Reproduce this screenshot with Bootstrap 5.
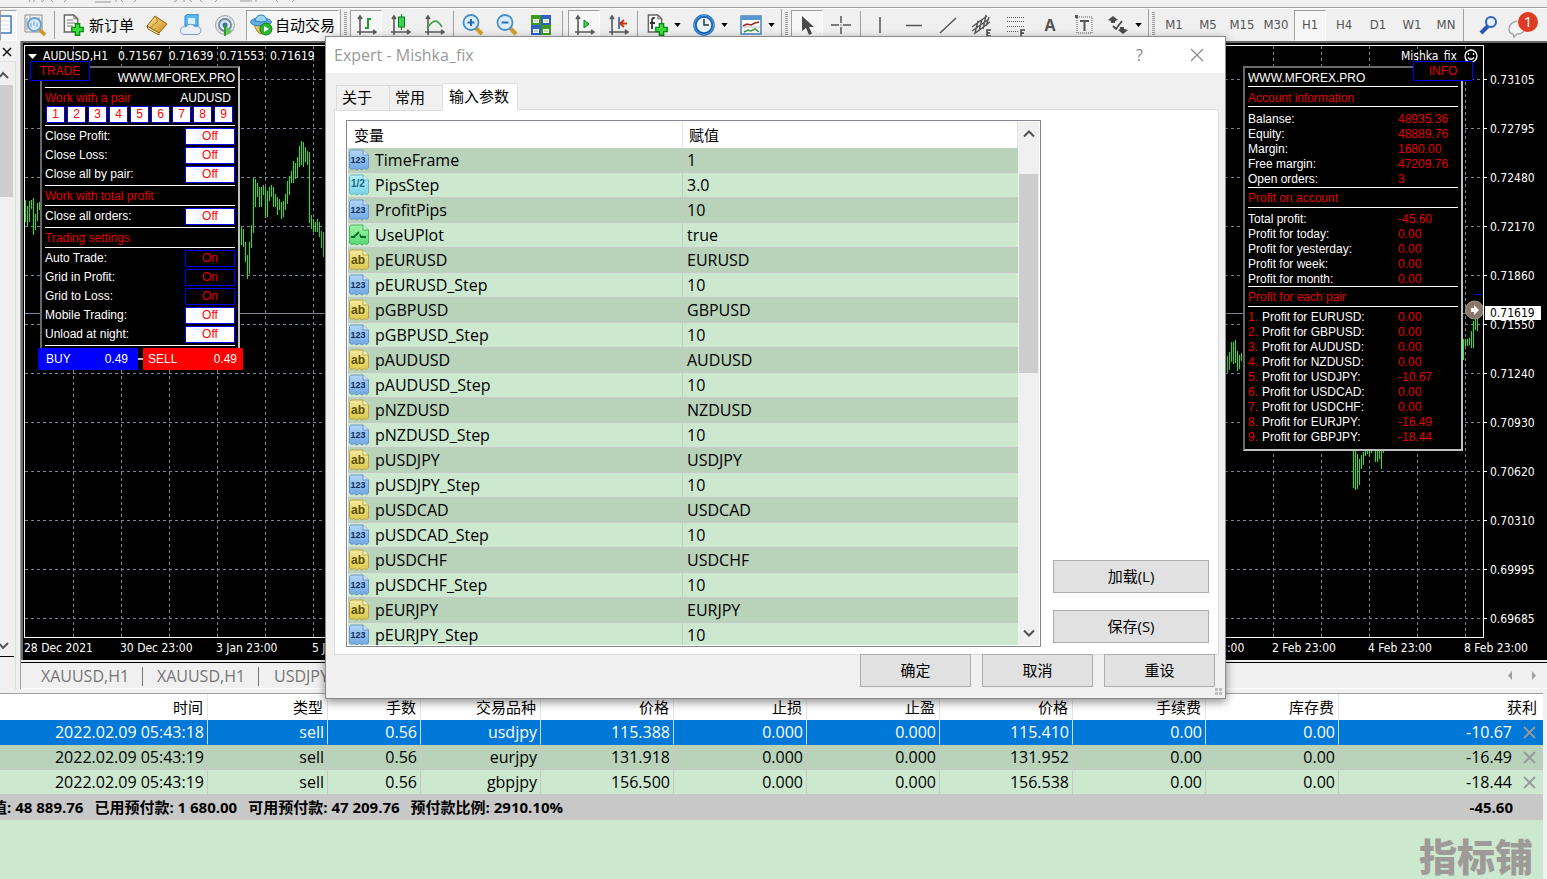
<!DOCTYPE html>
<html lang="zh-CN">
<head>
<meta charset="utf-8">
<meta name="viewport" content="width=device-width, initial-scale=1">
<title>AUDUSD,H1</title>
<link href="https://cdn.jsdelivr.net/npm/bootstrap@5.3.0/dist/css/bootstrap.min.css" rel="stylesheet">
<style>
:root{--face:#f0f0f0;--line:#a0a0a0;--mint:#cce8cf;--sage:#b8d3b9;--rule:#c8c8c8;--ui:"Open Sans","Noto Sans","Noto Sans CJK SC",sans-serif;--tahoma:"DejaVu Sans Condensed","Noto Sans",sans-serif;--arial:"Liberation Sans",Arial,sans-serif}
body{font:15px/20px var(--ui);color:#000;background:var(--face);overflow:hidden}
svg{display:block;flex:none}
button{font:inherit}
/* menu remnant and toolbar */
.menu-edge{height:8px;border-bottom:1px solid var(--line)}
.toolbar{height:33px;border-top:1px solid #fff}
.tool{width:32px;height:31px;margin:0 1px;padding:0;border:1px solid transparent;border-radius:0;background:none;color:#555;display:flex;align-items:center;justify-content:center;flex:none}
.tool.pressed{border-color:#a0a0a0 #fff #fff #a0a0a0;background:#f7f7f7}
.tool.split{width:45px;justify-content:space-between;padding:0 4px}
.tool.text{width:auto;color:#000;white-space:nowrap;gap:4px;padding:0 4px}
.tool.text.pressed{gap:2px;padding:0 3px}
.tool.frame-key{font:13px/16px var(--tahoma);color:#555}
.split-line{width:1px;height:28px;background:var(--line);margin:0 2px;flex:none}
.dock{width:9px;border-left:1px solid var(--line);flex:none;display:flex;align-items:center;padding-left:3px}
.dock i{width:3px;height:26px;background:repeating-linear-gradient(#999 0 1px,transparent 1px 2px)}
/* left dock */
.side{width:21px;border-right:1px solid var(--line);flex:none}
.side-in{width:16px;border-right:1px solid var(--mint)}
.side-thumb{width:13px;height:112px;background:#cdcdcd}
/* chart */
.chart{background:#000;color:#fff;font:12px/14px var(--tahoma);border-top:2px solid #696969;border-left:2px solid #696969;padding:2px 0 0 1px}
.plot{border:1px solid #fff;min-width:0}
.plot>svg{width:100%;height:591px}
.prices{width:63px;padding-top:10px;margin-bottom:-5px;flex:none}
.prices>div{height:49px;padding-left:6px;display:flex;align-items:center;position:relative}
.prices>div::before{content:"";position:absolute;left:0;width:3px;height:1px;background:#fff}
.price-now{position:absolute;right:6px;top:261px;width:56px;height:14px;padding-left:5px;background:#fff;color:#000;font-size:12px;line-height:14px}
.dates{height:22px;padding-top:3px;overflow:hidden}
.dates span{width:96px;flex:none;white-space:nowrap}
.dates-end{width:371px;overflow:hidden}
.symbol-line{position:absolute;left:3px;top:3px;gap:6px}
.expert-line{position:absolute;right:5px;top:3px;gap:7px}
/* expert panels */
.ea{position:absolute;top:20px;border:2px solid;border-color:#696969 #c0c0c0 #c0c0c0 #696969;background:#000;font:12px/15px var(--arial);padding:0 3px}
.ea-trade{left:15px;width:200px;height:294px}
.ea-info{right:20px;width:220px;height:385px}
.ea-tab{position:absolute;top:15px;width:60px;height:20px;background:#000;border:1px solid #00f;color:#e00000;font:12px/18px var(--arial);padding:0;text-align:center;border-radius:1px}
.ea .site{height:19px;line-height:21px}
.ea .ttl{height:19px;padding-top:2px;color:#e00000;display:flex;align-items:center}
.ea .ln{height:1px;background:#fff}
.ea .set-rows{padding:1px 0}
.ea .set{height:19px;display:flex;align-items:center;justify-content:space-between}
.pairs{height:19px;gap:2px;padding-left:1px}
.sw{width:50px;height:17px;border:1px solid #00f;border-radius:1px;background:#fff;color:#f00;padding:0;line-height:15px;text-align:center}
.sw.on{background:#000;color:#e00000}
.sw.num{width:19px}
.trade-go{position:absolute;top:302px;width:100px;height:22px;border:0;border-radius:1px;color:#fff;font:12px/22px var(--arial);padding:0 6px 0 8px;display:flex;justify-content:space-between}
.ea dl{margin:0;display:grid;grid-template-columns:150px 1fr;line-height:15px}
.ea dt{font-weight:400}.ea dd{margin:0;color:#e00000}
.ea dt b{display:inline-block;width:14px;color:#e00000;font-weight:400}
/* chart tabs */
.chart-tabs{height:27px;border-top:1px solid #000;border-bottom:1px solid #fff;margin-top:2px;padding-left:6px}
.chart-tabs a{width:116px;color:#767676;text-decoration:none;font-size:16px;line-height:22px;text-align:center;position:relative}
.chart-tabs a:last-of-type{padding-right:6px}
.chart-tabs a::after{content:"";position:absolute;right:0;top:2px;height:19px;border-right:1px solid #767676}
/* terminal */
.terminal{background:var(--mint);border-top:1px solid var(--line);margin-right:4px;min-height:0}
.deals{table-layout:fixed;border-collapse:separate;border-spacing:0}
.deals th{background:#fff;font-weight:400;height:26px;text-align:right;padding:0 4px;border-right:1px solid #e5e5e5;vertical-align:middle}
.deals td{height:25px;font-size:16px;line-height:23px;text-align:right;padding:0 3px;border-right:1px solid var(--rule);border-bottom:1px solid var(--rule);white-space:nowrap}
.deals th:last-child,.deals td:last-child{border-right:0}
.deals th:last-child{padding-right:6px}
.deals tr.sel td{background:#0078d7;color:#fff;border-bottom-color:#0078d7}
.deals tr.sel td:not(:last-child){border-right-color:#c8dcf0}
.deals tr.alt td{background:var(--sage)}
.deals td .btn{padding:0;border:0;margin-left:11px;width:13px;vertical-align:-1px;line-height:1}
.deals tfoot td{background:var(--rule);font-weight:700;font-size:15px;border-right:0}
.deals tfoot .bal{padding-left:0;overflow:hidden}
.bal-list{gap:11px;margin-left:-8px}
.stamp{position:absolute;right:14px;bottom:2px;font:900 38px/44px "Noto Sans CJK SC",sans-serif;color:#9e9a98}
/* dialog */
.dlg{position:absolute;left:325px;top:36px;width:901px;background:var(--face);border:1px solid #8c8c8c;box-shadow:0 3px 9px rgba(0,0,0,.45);z-index:5}
.dlg-title{height:36px;background:#fff;color:#999;font-size:16px;padding:0 0 0 8px}
.dlg-title .btn{width:57px;border:0;padding:0;color:#888;font-size:16px}
.dlg .nav-tabs{border:0;padding:10px 0 0 10px;align-items:flex-end;margin-bottom:-1px}
.dlg .nav-link{border:1px solid #dcdcdc;border-radius:0;color:#000;background:var(--face);padding:1px 0 3px 5px;width:54px;text-align:left;margin-right:-1px;height:26px;line-height:20px}
.dlg .nav-link.active{width:76px;height:28px;background:#fff;border-bottom-color:#fff;padding-left:6px}
.sheet{margin:0 6px 0 8px;background:#fff;border:1px solid #dcdcdc;padding:10px 9px 7px 11px;gap:12px}
.grid-box{border:1px solid #828790;height:527px;overflow:hidden;padding:1px}
.params{table-layout:fixed;border-collapse:separate;border-spacing:0}
.params th{background:#fff;height:26px;font-weight:400;padding:0 6px;border-right:1px solid #e5e5e5}
.params td{height:25px;font-size:16px;line-height:24px;padding:0 4px;border-bottom:1px solid var(--rule);background:var(--mint);white-space:nowrap}
.params tr:nth-child(odd) td{background:var(--sage)}
.params td:first-child{border-right:1px solid var(--rule);padding:0}
.params td svg{display:inline-block;vertical-align:top;margin:1px 5px 0 0}
.scroll{width:21px;background:var(--face);flex:none}
.scroll i{width:19px;height:199px;background:#cdcdcd;margin-top:36px}
.push{height:33px;background:#e1e1e1;border:1px solid #adadad;border-radius:0;padding:0 0 2px;color:#000;font-size:15px;line-height:20px}
.push.side-btn{width:156px}.push.foot{width:111px}
.side-btns{gap:17px;padding-bottom:4px}
.foot-btns{gap:11px;padding:0 10px 11px;margin-top:-1px}
.grab{position:absolute;right:2px;bottom:2px}
</style>
</head>
<body class="vh-100 d-flex flex-column position-relative">

<svg width="0" height="0" class="position-absolute">
 <defs>
  <linearGradient id="gGold" x2="1" y2="1"><stop stop-color="#ffe69a"/><stop offset="1" stop-color="#c98a12"/></linearGradient>
  <linearGradient id="gBlue" y2="1" x2="0"><stop stop-color="#b5d7fa"/><stop offset="1" stop-color="#6ea6e4"/></linearGradient>
  <linearGradient id="gYel" y2="1" x2="0"><stop stop-color="#f6eca0"/><stop offset="1" stop-color="#dcc64a"/></linearGradient>
  <linearGradient id="gCyan" y2="1" x2="0"><stop stop-color="#b2f0fa"/><stop offset="1" stop-color="#79d3e6"/></linearGradient>
  <linearGradient id="gGreen" y2="1" x2="0"><stop stop-color="#9bf5a8"/><stop offset="1" stop-color="#56d872"/></linearGradient>
  <symbol id="axes" viewBox="0 0 22 22"><path d="M5 3v18M2 18h18M3 5l2-3 2 3M18 16l3 2-3 2" fill="none" stroke="#5a5a5a" stroke-width="1.6"/></symbol>
  <symbol id="caret" viewBox="0 0 8 5"><path d="M0 0h8L4 5z" fill="#000"/></symbol>
  <symbol id="plus" viewBox="0 0 12 12"><path d="M4 .7h4V4h3.300v4H8v3.300H4V8H.7V4H4z" fill="#3ddc3d" stroke="#0a8a12" stroke-width="1.200"/></symbol>
  <symbol id="sheetI" viewBox="0 0 16 20"><path d="M1 1h10l4 4v14H1z" fill="#fafafa" stroke="#666" stroke-width="1.500"/><path d="M11 1v4h4" fill="none" stroke="#666"/></symbol>
  <symbol id="t-int" viewBox="0 0 22 22"><path d="M1.500 2.500 3 1h12l5.500 5v13l-2 1.500-2-1-2.500 1.500-2.500-1.500-3 1.500-2.500-1.500-2 1-2.500-1.500z" fill="url(#gBlue)" stroke="#6d96c2"/><path d="M15 1v5h5.500" fill="#cfe5fc" stroke="#6d96c2"/><text x="2.500" y="14" font-family="Liberation Sans" font-size="9" font-weight="700" fill="#13315c">123</text></symbol>
  <symbol id="t-str" viewBox="0 0 22 22"><path d="M1.500 2.500 3 1h12l5.500 5v13l-2 1.500-2-1-2.500 1.500-2.500-1.500-3 1.500-2.500-1.500-2 1-2.500-1.500z" fill="url(#gYel)" stroke="#b9a548"/><path d="M15 1v5h5.500" fill="#fbf5c8" stroke="#b9a548"/><text x="3" y="15" font-family="Liberation Sans" font-size="12" font-weight="700" fill="#5d4e08">ab</text></symbol>
  <symbol id="t-dbl" viewBox="0 0 22 22"><path d="M1.500 2.500 3 1h12l5.500 5v13l-2 1.500-2-1-2.500 1.500-2.500-1.500-3 1.500-2.500-1.500-2 1-2.500-1.500z" fill="url(#gCyan)" stroke="#6bb5c6"/><path d="M15 1v5h5.500" fill="#d8f8fd" stroke="#6bb5c6"/><text x="3" y="13" font-family="Liberation Sans" font-size="10" font-weight="700" fill="#14697c">1/2</text></symbol>
  <symbol id="t-bool" viewBox="0 0 22 22"><path d="M1.500 2.500 3 1h12l5.500 5v13l-2 1.500-2-1-2.500 1.500-2.500-1.500-3 1.500-2.500-1.500-2 1-2.500-1.500z" fill="url(#gGreen)" stroke="#4dae60"/><path d="M15 1v5h5.500" fill="#c8fbd0" stroke="#4dae60"/><path d="M3 13h3l5-5M12 10.500l1 2.500h5" fill="none" stroke="#0b6d22" stroke-width="1.800"/></symbol>
 </defs>
</svg>

<div class="menu-edge">
 <svg width="320" height="3"><path d="M30 0l-1 2M34 0v2M41 1q2 1 3-1M51 0l2 2M66 0l-2 2M95 2h16M116 0v2M121 0l2 2M136 0l-2 2M177 0l-3 2M184 0v2M190 0l2 2M200 0l2 2M217 0l-2 2M240 1h12M256 0v2M276 0l2 2M294 0l-2 2" stroke="#999" fill="none"/></svg>
</div>

<div class="toolbar d-flex align-items-center" role="toolbar">
 <button class="tool pressed" style="width:17px;margin-left:0" aria-label="窗口"><svg width="15" height="20" viewBox="0 0 15 20"><rect x="-4" y="1" width="14" height="17" fill="#fff" stroke="#3d78b8" stroke-width="1.500"/><path d="M0 6h8M0 10h8M0 14h8" stroke="#cfe0f2"/></svg></button>
 <button class="tool" aria-label="数据窗口"><svg width="24" height="24" viewBox="0 0 24 24"><path d="M2 2h17v17H2z" fill="#f3f3f3" stroke="#8c8c8c"/><path d="M4 5v12M7 3v5M16 4v9" stroke="#999"/><path d="m16 16 6 6" stroke="#c9962a" stroke-width="3.500"/><circle cx="11.500" cy="11.500" r="6.500" fill="#d5e9fb" stroke="#6a9fd4" stroke-width="2"/><path d="M8 10v4M11 8v5M14 10v4" stroke="#7aa7cf"/></svg></button>
 <span class="split-line"></span>
 <button class="tool text"><svg width="22" height="22" viewBox="0 0 22 22"><use href="#sheetI" width="16" height="19"/><path d="M4 6h6M4 9h8M4 12h6" stroke="#777"/><use href="#plus" x="8" y="9" width="13" height="13"/></svg>新订单</button>
 <button class="tool" aria-label="历史"><svg width="22" height="22" viewBox="0 0 22 22"><path d="M1 12 9 2l12 8-8 9z" fill="url(#gGold)" stroke="#8f6410"/><path d="m1 12 12 7v2L2 15z" fill="#fff0c0" stroke="#8f6410"/><path d="m9 2 3 5-8 7" fill="none" stroke="#a87820"/></svg></button>
 <button class="tool" aria-label="云"><svg width="22" height="22" viewBox="0 0 22 22"><path d="M5 2 8 0h10v12H5z" fill="#5cb6f2" stroke="#2b86cf"/><path d="M8 4h7v6H8z" fill="#d9f0ff"/><path d="M5 20.500a4 4 0 1 1 1-7.500 5 5 0 0 1 9 0 4 4 0 1 1 2 7.500z" fill="#e9f0fa" stroke="#7f9bc4"/></svg></button>
 <button class="tool" aria-label="信号"><svg width="22" height="22" viewBox="0 0 22 22"><circle cx="11" cy="11" r="9.500" fill="#dfe4e8" stroke="#9aa6ae"/><circle cx="11" cy="11" r="6" fill="none" stroke="#6d8f9c" stroke-width="1.800"/><path d="M11 11v10a10 10 0 0 0 7-4z" fill="#6cc46c"/><circle cx="11" cy="11" r="2.500" fill="#2f6fae"/><path d="M11 11v11" stroke="#2ca02c" stroke-width="2"/></svg></button>
 <button class="tool text pressed ms-1"><svg width="23" height="22" viewBox="0 0 23 22"><path d="M4 10q3 10 8 10t8-11z" fill="url(#gGold)" stroke="#a47c1c"/><ellipse cx="11" cy="8" rx="10.500" ry="4" fill="#5fb0e4" stroke="#2f7cb4"/><path d="M5 7q1-6 6-6t6 6q-6 2-12 0z" fill="#9ad4f5" stroke="#2f7cb4"/><circle cx="16" cy="15" r="6" fill="#2db52d" stroke="#0e7f17"/><path d="m14 12 5 3-5 3z" fill="#fff"/></svg><span>自动交易</span></button>
 <span class="dock h-100"><i></i></span>
 <button class="tool pressed" aria-label="柱状图"><svg width="22" height="22"><use href="#axes"/><path d="M13 4v11M13 5h3M10 14h3" stroke="#1b9a2f" stroke-width="2"/></svg></button>
 <button class="tool" aria-label="蜡烛图"><svg width="22" height="22"><use href="#axes"/><path d="M12.500 0v16" stroke="#0b7d1d"/><rect x="9.500" y="3" width="6" height="10" fill="#39d454" stroke="#0b7d1d"/></svg></button>
 <button class="tool" aria-label="折线图"><svg width="22" height="22"><use href="#axes"/><path d="M4 14q6-8 9-7t6 6" fill="none" stroke="#2f9a3c" stroke-width="1.500"/></svg></button>
 <span class="split-line"></span>
 <button class="tool" aria-label="放大"><svg width="22" height="22" viewBox="0 0 22 22"><path d="m14 14 6 6" stroke="#d3a02c" stroke-width="4"/><circle cx="9" cy="8.500" r="7.500" fill="#d9edfb" stroke="#4a8fc8" stroke-width="1.800"/><path d="M9 5v7M5.500 8.500h7" stroke="#2a6db0" stroke-width="2"/></svg></button>
 <button class="tool" aria-label="缩小"><svg width="22" height="22" viewBox="0 0 22 22"><path d="m14 14 6 6" stroke="#d3a02c" stroke-width="4"/><circle cx="9" cy="8.500" r="7.500" fill="#d9edfb" stroke="#4a8fc8" stroke-width="1.800"/><path d="M5.500 8.500h7" stroke="#2a6db0" stroke-width="2"/></svg></button>
 <button class="tool" aria-label="平铺"><svg width="22" height="22" viewBox="0 0 22 22"><path d="M1 1h10v10H1zM11 11h10v10H11z" fill="#3f9a1a"/><path d="M11 1h10v10H11zM1 11h10v10H1z" fill="#2b62c4"/><path d="M3 5h6v4H3zM13 5h6v4h-6zM3 15h6v4H3zM13 15h6v4h-6z" fill="#fff"/><path d="M4 7h4M14 7h4M4 17h4M14 17h4" stroke="#9bc07f"/></svg></button>
 <span class="split-line mx-1"></span>
 <button class="tool pressed" aria-label="自动滚动"><svg width="22" height="22"><use href="#axes"/><path d="m11 6 5 4-5 4z" fill="#3ad04e" stroke="#0b7d1d"/></svg></button>
 <button class="tool" aria-label="平移"><svg width="22" height="22"><use href="#axes"/><path d="M12 3v12" stroke="#2a5fa8" stroke-width="1.600"/><path d="M20 9.500h-6M17 6l-4 3.500 4 3.500" fill="none" stroke="#c3390f" stroke-width="1.800"/></svg></button>
 <span class="split-line"></span>
 <button class="tool split" aria-label="指标"><svg width="22" height="22" viewBox="0 0 22 22"><use href="#sheetI" x="1" width="16" height="19"/><path d="M9 4q-3-1-3 3v8M4 9h5" fill="none" stroke="#333" stroke-width="1.800"/><use href="#plus" x="9" y="9" width="13" height="13"/></svg><svg width="7" height="4"><use href="#caret"/></svg></button>
 <button class="tool split" aria-label="周期"><svg width="22" height="22" viewBox="0 0 22 22"><circle cx="11" cy="11" r="9" fill="#eaf4fc" stroke="#1763b8" stroke-width="3.500"/><circle cx="11" cy="11" r="9.500" fill="none" stroke="#5aa5ea"/><path d="M11 5v6h5" fill="none" stroke="#333" stroke-width="1.500"/></svg><svg width="7" height="4"><use href="#caret"/></svg></button>
 <button class="tool split" aria-label="模板"><svg width="22" height="22" viewBox="0 0 22 22"><path d="M1 2h20v18H1z" fill="#fff" stroke="#4a82bd" stroke-width="1.500"/><path d="M1 2h20v4H1z" fill="#5a96d2"/><path d="m3 12 4-2 4 1 4-2 4-1" fill="none" stroke="#a02818" stroke-width="1.500"/><path d="M2 13h18" stroke="#bbb"/><path d="m4 18 4-2 3 1 4-2 4 3" fill="none" stroke="#3c9a3c" stroke-width="1.500"/></svg><svg width="7" height="4"><use href="#caret"/></svg></button>
 <span class="dock h-100"><i></i></span>
 <button class="tool pressed" aria-label="光标"><svg width="22" height="22" viewBox="0 0 22 22"><path d="M6 2v15l4-3 3 7 3-1.500-3-6.500h5z" fill="#4a4a4a"/></svg></button>
 <button class="tool" aria-label="十字准线"><svg width="22" height="22" viewBox="0 0 22 22"><path d="M11 2v7M11 13v7M1 11h8M13 11h8M10.500 11h1" stroke="#555" stroke-width="1.500"/></svg></button>
 <span class="split-line"></span>
 <button class="tool" aria-label="垂直线"><svg width="22" height="22"><path d="M11 3v16" stroke="#555" stroke-width="1.500"/></svg></button>
 <button class="tool" aria-label="水平线"><svg width="22" height="22"><path d="M3 11.500h16" stroke="#555" stroke-width="1.500"/></svg></button>
 <button class="tool" aria-label="趋势线"><svg width="22" height="22"><path d="M3 19 19 4" stroke="#555" stroke-width="1.500"/></svg></button>
 <button class="tool" aria-label="通道"><svg width="22" height="22" viewBox="0 0 22 22"><path d="M1 13 16 2M3 20 19 8M1 17 18 5M7 7 4 19M11 5 8 17M15 1l-3 14M18 3l-3 9" stroke="#555" stroke-width="1.400"/><path d="M20 16h-4v6h4M16 19h3" fill="none" stroke="#444" stroke-width="1.500"/></svg></button>
 <button class="tool" aria-label="斐波那契"><svg width="22" height="22" viewBox="0 0 22 22"><path d="M2 3.500h18M2 7.500h18M2 12.500h18M2 17.500h12" stroke="#555" stroke-dasharray="1 1"/><path d="M20 16h-4v6M16 19h3" fill="none" stroke="#444" stroke-width="1.500"/></svg></button>
 <button class="tool fw-bold fs-6" aria-label="文字">A</button>
 <button class="tool" aria-label="标签"><svg width="22" height="22" viewBox="0 0 22 22"><rect x="4" y="3" width="15" height="16" fill="none" stroke="#555" stroke-dasharray="1 1"/><path d="M7 7h9M11.500 7v10" stroke="#555" stroke-width="2"/><path d="M2 1h3v3H2z" fill="#555"/></svg></button>
 <button class="tool split" aria-label="箭头"><svg width="22" height="22" viewBox="0 0 22 22"><path d="m6 2 5 4-3 1v2H4V7L1 6zM13 13h4v2l4 1-5 4-5-4 2-1z" fill="#4a4a4a"/><path d="m6 12 3 3 6-8" fill="none" stroke="#4a4a4a" stroke-width="1.800"/></svg><svg width="7" height="4"><use href="#caret"/></svg></button>
 <span class="dock h-100"><i></i></span>
 <button class="tool frame-key">M1</button><button class="tool frame-key">M5</button><button class="tool frame-key">M15</button><button class="tool frame-key">M30</button><button class="tool frame-key pressed">H1</button><button class="tool frame-key">H4</button><button class="tool frame-key">D1</button><button class="tool frame-key">W1</button><button class="tool frame-key">MN</button>
 <span class="dock h-100"></span>
 <button class="tool" aria-label="搜索"><svg width="20" height="20" viewBox="0 0 20 20"><path d="m9 11-7 7" stroke="#2a56b0" stroke-width="4"/><circle cx="12" cy="7" r="5" fill="#e4effb" stroke="#2f62bd" stroke-width="2"/></svg></button>
 <button class="tool" aria-label="通知"><svg width="32" height="28" viewBox="0 0 32 28"><path d="M10 10q-8 2-8 8 0 4 4 5l1 3 3-3q6 0 8-5" fill="#f4f4f4" stroke="#a9a9a9" stroke-width="1.500"/><circle cx="21" cy="11" r="10" fill="#df3a22"/><text x="21" y="16" text-anchor="middle" font-family="Open Sans" font-size="15" fill="#fff">1</text></svg></button>
</div>

<div class="d-flex flex-shrink-0">
 <aside class="side d-flex flex-column">
  <svg width="16" height="20" viewBox="0 0 16 20"><path d="m3 7 8 8M11 7l-8 8" stroke="#111" stroke-width="1.500"/></svg>
  <div class="side-in flex-grow-1 d-flex flex-column border-top">
   <svg width="12" height="23" viewBox="0 0 12 23"><path d="m0 15 3-4 5 5" fill="none" stroke="#555" stroke-width="2"/></svg>
   <div class="side-thumb"></div>
   <svg class="mt-auto" width="14" height="50" viewBox="0 0 14 50"><path d="m0 5 3 4 5-5" fill="none" stroke="#555" stroke-width="2"/><path d="M0 17.500h14" stroke="#000"/></svg>
  </div>
 </aside>
 <div class="flex-grow-1" style="min-width:0">
  <section class="chart">
   <div class="d-flex position-relative">
    <div class="plot flex-grow-1 position-relative">
     <svg shape-rendering="crispEdges" aria-hidden="true">
      <g id="grid" stroke="#778899" stroke-dasharray="3 3"></g>
      <path d="M0 267.500H1458" stroke="#778899"/>
      <path id="bars" stroke="#0f0" fill="none"/>
      <path d="M1449 248.500h7" stroke="#00f"/>
      <g shape-rendering="auto"><circle cx="1449.500" cy="264" r="9" fill="#8b7769" stroke="#a59a90"/><path d="M1446 262h3v-3l5 5-5 5v-3h-3z" fill="#fff"/></g>
      <path d="M1452.500 274v11" stroke="#0f0"/>
     </svg>
     <div class="symbol-line d-flex align-items-center"><svg width="9" height="5"><path d="M0 0h9L4.500 5z" fill="#fff"/></svg><span class="pe-1">AUDUSD,H1</span><span>0.71567</span><span>0.71639</span><span>0.71553</span><span>0.71619</span></div>
     <div class="expert-line d-flex align-items-center"><span>Mishka_fix</span><svg width="14" height="14" viewBox="0 0 14 14"><circle cx="7" cy="7" r="6" fill="none" stroke="#fff" stroke-width="1.300"/><path d="M4 8.500q3 3.500 6 0M4.500 4v2M9.500 4v2" fill="none" stroke="#fff" stroke-width="1.300"/></svg></div>

     <div class="ea ea-trade">
      <div class="site text-end">WWW.MFOREX.PRO</div>
      <div class="ln"></div>
      <div class="d-flex justify-content-between" style="height:18px;line-height:20px"><span style="color:#e00000">Work with a pair</span><span class="pe-1">AUDUSD</span></div>
      <div class="pairs d-flex" id="pairs"></div>
      <div class="ln"></div>
      <div class="set-rows">
       <div class="set">Close Profit:<button class="sw">Off</button></div>
       <div class="set">Close Loss:<button class="sw">Off</button></div>
       <div class="set">Close all by pair:<button class="sw">Off</button></div>
      </div>
      <div class="ln"></div><div class="ttl">Work with total profit</div><div class="ln"></div>
      <div class="set-rows"><div class="set">Close all orders:<button class="sw">Off</button></div></div>
      <div class="ln"></div><div class="ttl">Trading settings</div><div class="ln"></div>
      <div class="set-rows">
       <div class="set">Auto Trade:<button class="sw on">On</button></div>
       <div class="set">Grid in Profit:<button class="sw on">On</button></div>
       <div class="set">Grid to Loss:<button class="sw on">On</button></div>
       <div class="set">Mobile Trading:<button class="sw">Off</button></div>
       <div class="set">Unload at night:<button class="sw">Off</button></div>
      </div>
      <div class="ln"></div>
     </div>
     <button class="ea-tab" style="left:5px">TRADE</button>
     <button class="trade-go" style="left:13px;background:#00f"><span>BUY</span><span class="pe-1">0.49</span></button>
     <button class="trade-go" style="left:118px;background:#f00;padding-left:5px"><span>SELL</span><span>0.49</span></button>

     <div class="ea ea-info">
      <div style="height:18px;line-height:20px">WWW.MFOREX.PRO</div>
      <div class="ln"></div><div class="ttl pt-1">Account information</div><div class="ln"></div>
      <dl style="padding:5px 0 0"><dt>Balanse:</dt><dd>48935.36</dd><dt>Equity:</dt><dd>48889.76</dd><dt>Margin:</dt><dd>1680.00</dd><dt>Free margin:</dt><dd>47209.76</dd><dt>Open orders:</dt><dd>3</dd></dl>
      <div class="ln"></div><div class="ttl">Profit on account</div><div class="ln"></div>
      <dl style="padding-top:4px;height:78px"><dt>Total profit:</dt><dd>-45.60</dd><dt>Profit for today:</dt><dd>0.00</dd><dt>Profit for yesterday:</dt><dd>0.00</dd><dt>Profit for week:</dt><dd>0.00</dd><dt>Profit for month:</dt><dd>0.00</dd></dl>
      <div class="ln"></div><div class="ttl">Profit for each pair</div><div class="ln"></div>
      <dl id="pairProfit" style="padding-top:3px"></dl>
     </div>
     <button class="ea-tab" style="right:10px">INFO</button>
    </div>
    <div class="prices" id="prices"></div>
    <div class="price-now">0.71619</div>
   </div>
   <div class="dates d-flex justify-content-between">
    <div class="d-flex"><span>28 Dec 2021</span><span>30 Dec 23:00</span><span>3 Jan 23:00</span><span>5 Jan 23:00</span></div>
    <div class="d-flex dates-end"><span>31 Jan 23:00</span><span>2 Feb 23:00</span><span>4 Feb 23:00</span><span>8 Feb 23:00</span></div>
   </div>
  </section>
  <nav class="chart-tabs d-flex align-items-center">
   <a href="#">XAUUSD,H1</a><a href="#">XAUUSD,H1</a><a href="#">USDJPY,H1</a>
   <svg class="ms-auto me-2" width="32" height="9" viewBox="0 0 32 9"><path d="M5 0v9L1 4.500zM25 0v9l4-4.500z" fill="#a0a0a0"/></svg>
  </nav>
 </div>
</div>

<section class="terminal flex-grow-1 mt-1">
 <table class="deals w-100">
  <colgroup><col style="width:208px"><col style="width:120px"><col style="width:93px"><col style="width:120px"><col style="width:133px"><col style="width:133px"><col style="width:133px"><col style="width:133px"><col style="width:133px"><col style="width:133px"><col></colgroup>
  <thead><tr><th>时间</th><th>类型</th><th>手数</th><th>交易品种</th><th>价格</th><th>止损</th><th>止盈</th><th>价格</th><th>手续费</th><th>库存费</th><th>获利</th></tr></thead>
  <tbody id="deals"></tbody>
  <tfoot><tr><td class="bal" colspan="10"><div class="bal-list d-flex"><span>值: 48 889.76</span><span>已用预付款: 1 680.00</span><span>可用预付款: 47 209.76</span><span>预付款比例: 2910.10%</span></div></td><td style="padding-right:30px">-45.60</td></tr></tfoot>
 </table>
</section>
<div class="stamp">指标铺</div>

<div class="dlg" role="dialog" aria-label="Expert - Mishka_fix">
 <div class="dlg-title d-flex align-items-center">Expert - Mishka_fix
  <button class="btn ms-auto">?</button>
  <button class="btn d-flex justify-content-center" aria-label="关闭"><svg width="14" height="14"><path d="m1 1 12 12M13 1 1 13" stroke="#888" stroke-width="1.200"/></svg></button>
 </div>
 <div class="nav nav-tabs" role="tablist">
  <button class="nav-link" role="tab">关于</button><button class="nav-link" role="tab">常用</button><button class="nav-link active" role="tab">输入参数</button>
 </div>
 <div class="sheet d-flex">
  <div class="grid-box flex-grow-1 d-flex">
   <div class="flex-grow-1 overflow-hidden">
    <table class="params w-100">
     <colgroup><col style="width:335px"><col></colgroup>
     <thead><tr><th>变量</th><th>赋值</th></tr></thead>
     <tbody id="params"></tbody>
    </table>
   </div>
   <div class="scroll d-flex flex-column align-items-center py-2">
    <svg width="12" height="8"><path d="m1 6.500 5-5 5 5" fill="none" stroke="#505050" stroke-width="2"/></svg>
    <i></i>
    <svg class="mt-auto" width="12" height="8"><path d="m1 1.500 5 5 5-5" fill="none" stroke="#505050" stroke-width="2"/></svg>
   </div>
  </div>
  <div class="side-btns d-flex flex-column justify-content-end">
   <button class="btn push side-btn">加载(L)</button>
   <button class="btn push side-btn">保存(S)</button>
  </div>
 </div>
 <div class="foot-btns d-flex justify-content-end">
  <button class="btn push foot">确定</button><button class="btn push foot">取消</button><button class="btn push foot">重设</button>
 </div>
 <svg class="grab" width="8" height="8"><path d="M0 0h3v3H0zM4 0h3v3H4zM0 4h3v3H0zM4 4h3v3H4z" fill="#bdbdbd"/></svg>
</div>

<script src="https://cdn.jsdelivr.net/npm/bootstrap@5.3.0/dist/js/bootstrap.bundle.min.js"></script>
<script>
const el = id => document.getElementById(id);
// grid lines every 48 x 49 px
let g = '';
for (let x = 48; x < 1458; x += 48) g += `<path d="M${x}.5 0V591"/>`;
for (let y = 33; y < 591; y += 49) g += `<path d="M0 ${y}.5H1458"/>`;
el('grid').innerHTML = g;
// price bars: start x, then high/low pairs 2 px apart
const runs = [
 [0, 154,176, 160,180, 155,176, 154,163, 152,189, 168,184, 157,175, 156,164],
 [216, 181,199, 183,201, 196,216, 209,233, 196,228, 179,202, 132,187, 133,161, 137,151, 141,161, 141,161, 139,149, 141,172, 145,171, 141,155, 139,151, 141,161, 148,161, 151,169, 153,164, 156,173, 155,171, 148,164, 135,158, 130,149, 125,137, 115,137, 117,133, 111,131, 100,121, 95,119, 96,121, 101,116, 105,119, 106,177, 169,183, 173,186, 176,186, 173,186, 176,191, 185,202, 186,211],
 [1202, 310,327, 306,324, 296,316, 296,318, 294,317, 305,325, 309,323, 307,315],
 [1328, 405,442, 405,444, 408,443, 413,439, 409,423, 406,419, 405,410, 405,408, 405,410, 405,407, 0,0, 405,416, 405,416, 405,413, 405,423, 405,407],
 [1438, 293,314, 293,300, 293,300, 292,299, 285,302, 275,302, 273,284, 267,279]];
el('bars').setAttribute('d', runs.map(r => {
 let d = '';
 for (let i = 1; i < r.length; i += 2) d += `M${r[0] + i - 1}.5 ${r[i]}V${r[i + 1]}`;
 return d;
}).join(''));
el('prices').innerHTML = ['0.73105','0.72795','0.72480','0.72170','0.71860','0.71550','0.71240','0.70930','0.70620','0.70310','0.69995','0.69685'].map(p => `<div>${p}</div>`).join('');
el('pairs').innerHTML = [1,2,3,4,5,6,7,8,9].map(n => `<button class="sw num">${n}</button>`).join('');
el('pairProfit').innerHTML = [['EURUSD','0.00'],['GBPUSD','0.00'],['AUDUSD','0.00'],['NZDUSD','0.00'],['USDJPY','-10.67'],['USDCAD','0.00'],['USDCHF','0.00'],['EURJPY','-16.49'],['GBPJPY','-18.44']]
 .map((p, i) => `<dt><b>${i + 1}.</b>Profit for ${p[0]}:</dt><dd>${p[1]}</dd>`).join('');
const rows = [['int','TimeFrame','1'],['dbl','PipsStep','3.0'],['int','ProfitPips','10'],['bool','UseUPlot','true']];
for (const s of ['EURUSD','GBPUSD','AUDUSD','NZDUSD','USDJPY','USDCAD','USDCHF','EURJPY']) rows.push(['str','p' + s, s], ['int','p' + s + '_Step','10']);
el('params').innerHTML = rows.map(r => `<tr><td><svg width="22" height="22"><use href="#t-${r[0]}"/></svg>${r[1]}</td><td>${r[2]}</td></tr>`).join('');
const x = '<button class="btn" aria-label="平仓"><svg width="13" height="13"><path d="m1 1 11 11M12 1 1 12" stroke="#999" stroke-width="1.800"/></svg></button>';
el('deals').innerHTML = [
 ['sel','2022.02.09 05:43:18','usdjpy','115.388','115.410','-10.67'],
 ['alt','2022.02.09 05:43:19','eurjpy','131.918','131.952','-16.49'],
 ['','2022.02.09 05:43:19','gbpjpy','156.500','156.538','-18.44']]
 .map(d => `<tr class="${d[0]}"><td>${d[1]}</td><td>sell</td><td>0.56</td><td>${d[2]}</td><td>${d[3]}</td><td>0.000</td><td>0.000</td><td>${d[4]}</td><td>0.00</td><td>0.00</td><td style="padding-right:7px">${d[5]}${x}</td></tr>`).join('');
</script>
</body>
</html>
